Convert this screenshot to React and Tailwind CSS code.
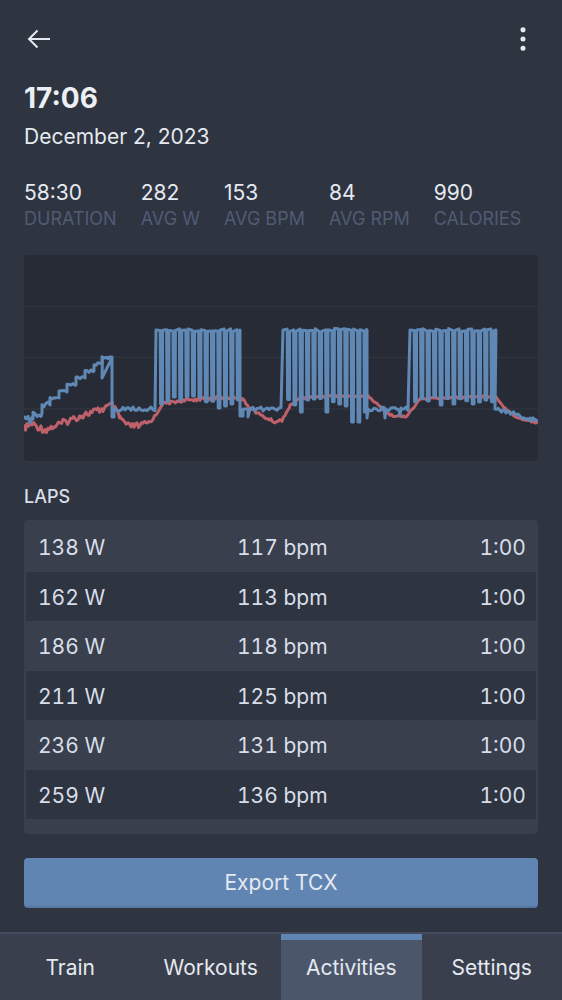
import { EllipsisVertical } from "lucide-react";

const stats = [
  { value: "58:30", label: "Duration" },
  { value: "282", label: "Avg W" },
  { value: "153", label: "Avg BPM" },
  { value: "84", label: "Avg RPM" },
  { value: "990", label: "Calories" },
];

const laps = [
  { watts: 138, bpm: 117 },
  { watts: 162, bpm: 113 },
  { watts: 186, bpm: 118 },
  { watts: 211, bpm: 125 },
  { watts: 236, bpm: 131 },
  { watts: 259, bpm: 136 },
];

const tabs = ["Train", "Workouts", "Activities", "Settings"];

const noise = (i) => {
  const v = Math.sin(i * 12.9898) * 43758.5453;
  return v - Math.floor(v) - 0.5;
};

const toPath = (points) =>
  points.map(([x, y], i) => `${i ? "L" : "M"}${x.toFixed(1)} ${y.toFixed(1)}`).join("");

// heart rate, page coordinates
const hrKeys = [
  [24, 428], [32, 424], [45, 430], [60, 424], [80, 416], [100, 410], [112, 405],
  [120, 418], [128, 426], [140, 426], [150, 422], [156, 415], [162, 404], [180, 401],
  [200, 399], [240, 397], [250, 408], [262, 416], [275, 422], [282, 420], [290, 406],
  [300, 398], [330, 396], [368, 396], [378, 405], [390, 415], [405, 417], [412, 410],
  [420, 399], [440, 398], [495, 396], [505, 408], [515, 416], [525, 420], [538, 423],
];

function heartRate() {
  const points = [];
  let i = 0;
  for (let k = 0; k < hrKeys.length - 1; k++) {
    const [x0, y0] = hrKeys[k];
    const [x1, y1] = hrKeys[k + 1];
    for (let x = x0; x < x1; x += 1.5) {
      const y = y0 + ((y1 - y0) * (x - x0)) / (x1 - x0);
      const amp = x < 150 ? 7 : x < 285 ? 3 : 2;
      points.push([x, y + noise(i++) * amp]);
    }
  }
  points.push([538, 423]);
  return points;
}

const ramp = [
  [24, 419], [33, 413], [42, 405], [50, 398], [59, 392],
  [67, 385], [76, 378], [85, 371], [94, 364], [102, 358],
];

// laps where the power drop goes deeper than usual
const block1Dips = { 0: 404, 9: 408, 10: 406, 11: 404 };
const block2Dips = { 1: 405, 2: 412, 6: 412, 8: 404, 9: 406, 10: 422, 11: 422, 12: 412, 13: 418 };
const block3Dips = { 4: 405, 6: 404, 9: 404 };

function block(points, start, end, dips) {
  let x = start;
  let n = 0;
  points.push([x, 330]);
  while (x < end - 6) {
    x += 4.2;
    points.push([x, 330 + noise(x) * 3]);
    const low = dips[n] || 399 + noise(x + 3) * 6;
    points.push([x + 0.4, low]);
    x += 2.2;
    points.push([x, low]);
    points.push([x + 0.2, 330 + noise(x + 1) * 3]);
    n++;
  }
  points.push([end, 330]);
}

function flat(points, start, end) {
  for (let x = start; x < end; x += 2) {
    points.push([x, 409 + noise(x) * 4]);
  }
}

function power() {
  const points = [];
  ramp.forEach(([x, y], i) => {
    const next = ramp[i + 1] ? ramp[i + 1][0] : 112;
    const amp = x < 50 ? 8 : 3;
    for (let px = x; px < next; px += 2) {
      points.push([px, y + noise(px) * amp]);
    }
    points.push([next, y]);
  });
  points.push([102, 378], [102.5, 358], [112, 357], [112, 417], [114, 417], [114, 409]);
  flat(points, 115, 156);
  block(points, 156, 240, block1Dips);
  points.push([240, 416], [243, 416], [243, 409], [248, 409], [248, 417], [250, 409]);
  flat(points, 251, 283);
  block(points, 283, 367, block2Dips);
  points.push([367, 418], [368, 409]);
  flat(points, 370, 385);
  points.push([385, 418], [386, 409]);
  flat(points, 387, 400);
  points.push([400, 416], [401, 408]);
  flat(points, 402, 410);
  block(points, 410, 496, block3Dips);
  points.push([495, 409]);
  for (let x = 497; x <= 538; x += 1.5) {
    points.push([x, 409 + ((x - 497) / 41) * 12 + noise(x) * 4]);
  }
  return points;
}

function Chart() {
  return (
    <div className="mt-[23px] h-[206px] rounded-sm bg-[#272b35]">
      <svg viewBox="24 255 514 206" className="block h-full w-full" fill="none">
        <path d="M24 306.5H538M24 357.5H538M24 409H538" stroke="#2f343f" strokeWidth="1.5" />
        <path d={toPath(heartRate())} stroke="#bf616a" strokeWidth="3" strokeLinejoin="round" />
        <path d={toPath(power())} stroke="#6088b5" strokeWidth="3" strokeLinejoin="round" />
      </svg>
    </div>
  );
}

export default function App() {
  return (
    <div className="flex h-[1000px] flex-col bg-[#2e3440] font-['Inter',sans-serif] text-[#d8dee9]">
      <main className="flex-1 px-6">
        <header className="flex h-[78px] items-center justify-between">
          <button className="text-[#e5e9f0]">
            <svg width="26" height="20" viewBox="0 0 26 20" fill="none" stroke="currentColor" strokeWidth="2">
              <path d="M26 10H6M13.5 1.5 5 10 13.5 18.5" />
            </svg>
          </button>
          <button className="-mr-[1px] text-[#e5e9f0]">
            <EllipsisVertical size={32} strokeWidth={1.8} />
          </button>
        </header>

        <h1 className="text-[28px] leading-[40px] font-bold text-[#eceff4]">17:06</h1>
        <p className="mt-[3px] text-[21px] leading-[32px] text-[#e5e9f0]">December 2, 2023</p>

        <div className="mt-[27px] flex gap-6">
          {stats.map((stat) => (
            <div key={stat.label}>
              <div className="text-[21px] leading-[26px] text-[#e5e9f0]">{stat.value}</div>
              <div className="text-[18px] leading-[26px] text-[#505c74] uppercase">{stat.label}</div>
            </div>
          ))}
        </div>

        <Chart />

        <h2 className="mt-[25px] text-[18px] leading-[22px] font-medium text-[#d8dee9]">LAPS</h2>

        <div className="mt-[12px] h-[314px] rounded-sm bg-[#393f4c] px-[2px] pt-[2px]">
          {laps.map((lap, i) => (
            <div
              key={lap.watts}
              className={`grid h-[49.5px] grid-cols-[199px_1fr_auto] items-center pt-[2px] pr-[10px] pl-[12px] text-[21px] tabular-nums ${
                i % 2 ? "bg-[#2e3440]" : "bg-[#393f4c]"
              }`}
            >
              <span>{lap.watts} W</span>
              <span>{lap.bpm} bpm</span>
              <span>1:00</span>
            </div>
          ))}
        </div>

        <button className="mt-6 h-[50px] w-full rounded-sm border-b-2 border-[#56779f] bg-[#6085b3] pt-[2px] text-[21px] text-[#e5e9f0]">
          Export TCX
        </button>
      </main>

      <nav className="grid h-[68px] grid-cols-4 border-t-2 border-[#434c5e] bg-[#393f4c]">
        {tabs.map((tab) => (
          <div
            key={tab}
            className={
              tab === "Activities"
                ? "flex items-center justify-center border-t-[6px] border-[#6085b3] bg-[#4c566a] pb-[5px] text-[21px] text-[#e5e9f0]"
                : "flex items-center justify-center pt-[1px] text-[21px] text-[#e5e9f0]"
            }
          >
            {tab}
          </div>
        ))}
      </nav>
    </div>
  );
}
